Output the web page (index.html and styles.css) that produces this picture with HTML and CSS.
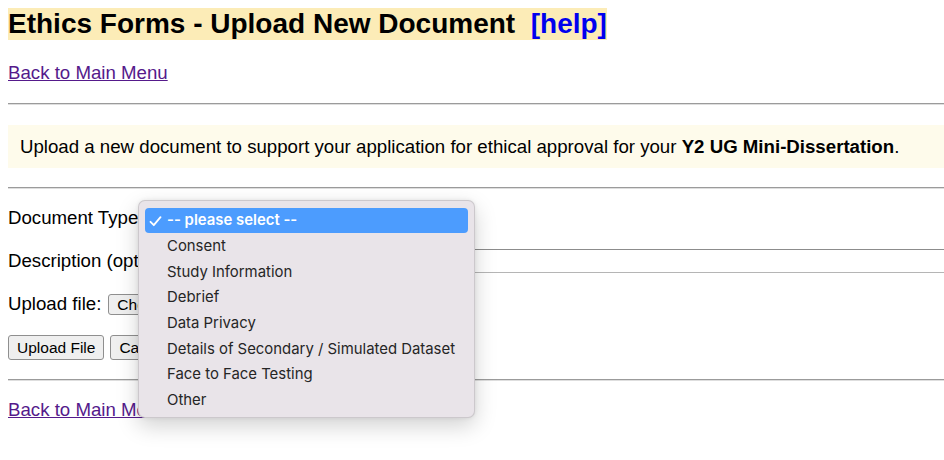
FILE: index.html
```html
<!DOCTYPE html>
<html lang="en">
<head>
<meta charset="utf-8">
<title>Ethics Forms - Upload New Document</title>
<link rel="stylesheet" href="styles.css">
</head>
<body>
<h1 class="title"><span class="title-band">Ethics Forms - Upload New Document&nbsp; <a class="help" href="#">[help]</a></span></h1>
<p class="nav"><a class="back" href="#">Back to Main Menu</a></p>
<hr class="rule rule-top">
<div class="info">Upload a new document to support your application for ethical approval for your <b>Y2 UG Mini-Dissertation</b>.</div>
<hr class="rule rule-info">
<form class="form">
  <div class="row">
    <label class="label">Document Type:</label>
    <select class="select"><option>-- please select --</option></select>
  </div>
  <div class="row row-clip">
    <label class="label">Description (optional):</label>
    <input class="text-input" type="text">
  </div>
  <div class="row">
    <label class="label">Upload file:</label>
    <span class="file-btn">Choose File</span>
  </div>
  <div class="row">
    <button type="button" class="btn">Upload File</button>
    <button type="button" class="btn">Cancel</button>
  </div>
</form>
<hr class="rule rule-bottom">
<p class="nav nav-bottom"><a class="back" href="#">Back to Main Menu</a></p>

<div class="popup">
  <div class="opt opt-selected"><svg class="check" width="13" height="11" viewBox="0 0 13 11"><polyline points="1.5,5.8 4.8,9.2 11.5,1.2" fill="none" stroke="#ffffff" stroke-width="1.8" stroke-linecap="round" stroke-linejoin="round"/></svg>-- please select --</div>
  <div class="opt">Consent</div>
  <div class="opt">Study Information</div>
  <div class="opt">Debrief</div>
  <div class="opt">Data Privacy</div>
  <div class="opt">Details of Secondary / Simulated Dataset</div>
  <div class="opt">Face to Face Testing</div>
  <div class="opt">Other</div>
</div>
</body>
</html>
```
FILE: styles.css
```css
html, body {
  background: #ffffff;
}
html {
  overflow: hidden;
}
body {
  margin: 8px 0 0 8px;
  min-height: 452px;
  font-family: "Liberation Sans", Arial, sans-serif;
  font-size: 18.67px;
  color: #000;
  position: relative;
}
.title {
  margin: 0;
  font-size: 28px;
  line-height: 32px;
  font-weight: bold;
}
.title-band {
  display: inline-block;
  background: #fcecb7;
}
.help {
  color: #0000ee;
  text-decoration: none;
}
.nav {
  margin: 22px 0 0 0;
  line-height: 21.5px;
}
.back {
  color: #551a8b;
  text-decoration: underline;
}
.rule {
  border: 0;
  border-top: 1px solid #9b9b9b;
  border-bottom: 1px solid #dedede;
  height: 0;
  margin: 0;
}
.rule-top {
  margin-top: 19px;
}
.info {
  margin-top: 20px;
  background: #fefbeb;
  padding: 11px 12px;
  line-height: 21.5px;
}
.rule-info {
  margin-top: 19px;
}
.form {
  display: flex;
  flex-direction: column;
  gap: 19px;
  margin-top: 17px;
}
.row {
  display: flex;
  align-items: center;
  height: 24px;
  gap: 6px;
  white-space: nowrap;
}
.row-clip {
  overflow: hidden;
}
.label {
  line-height: 21.5px;
}
.select {
  font-family: "Liberation Sans", Arial, sans-serif;
  font-size: 15.5px;
  height: 24px;
}
.text-input {
  flex: none;
  width: 820px;
  height: 24px;
  box-sizing: border-box;
  border: 1px solid #8c8c8c;
  border-bottom-color: #b5b5b5;
  padding: 0 4px;
  font-size: 15.5px;
}
.file-btn,
.btn {
  font-family: "Liberation Sans", Arial, sans-serif;
  font-size: 15.5px;
  color: #000;
  background: #efefef;
  border: 1px solid #8f8f8f;
  border-radius: 3px;
  padding: 0 8px;
  box-sizing: border-box;
}
.file-btn {
  height: 21px;
  line-height: 19px;
  margin-left: 1px;
}
.btn {
  height: 25px;
  line-height: 23px;
}
.rule-bottom {
  margin-top: 20px;
}
.nav-bottom {
  margin-top: 18px;
}
.popup {
  position: absolute;
  left: 130px;
  top: 192px;
  width: 337px;
  height: 218px;
  box-sizing: border-box;
  padding: 7px 6px;
  background: #e9e4e9;
  border: 1px solid rgba(0, 0, 0, 0.12);
  border-radius: 7px;
  box-shadow: 0 8px 22px rgba(0, 0, 0, 0.18), 0 0 4px rgba(0, 0, 0, 0.08);
  font-family: Inter, "Noto Sans", sans-serif;
  font-size: 14.9px;
  color: #262626;
}
.opt {
  height: 25.7px;
  line-height: 27px;
  padding-left: 22px;
  position: relative;
}
.opt-selected {
  background: #4c9cfe;
  color: #ffffff;
  border-radius: 4px;
  font-weight: 600;
  height: 25px;
  line-height: 25px;
}
.check {
  position: absolute;
  left: 4px;
  top: 8px;
}
```
